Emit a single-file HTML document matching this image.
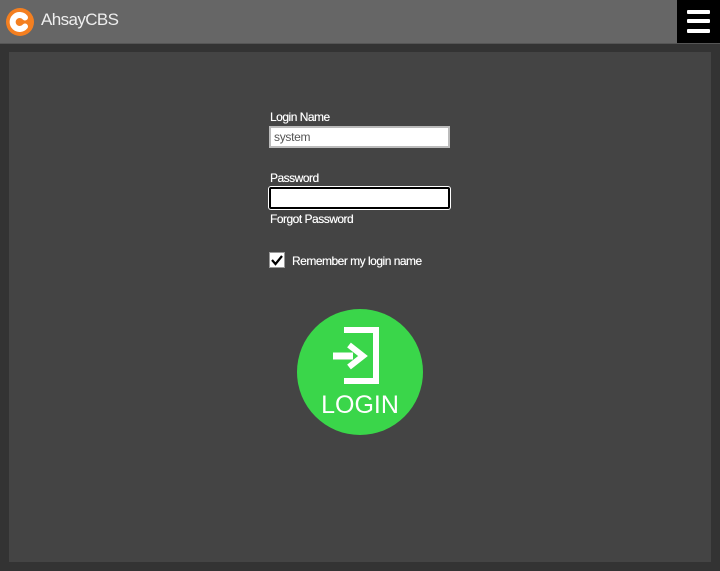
<!DOCTYPE html>
<html><head><style>
body{margin:0;width:720px;height:571px;background:#333;font-family:"Liberation Sans",Arial,sans-serif;position:relative;overflow:hidden}
.hdr{position:absolute;left:0;top:0;width:720px;height:43px;background:#666;border-bottom:1px solid #555}
.logo{position:absolute;left:6px;top:8px;width:28px;height:28px;border-radius:50%;background:#f47f20}
.brand{position:absolute;left:41px;top:10px;color:#eee;font-size:17px;font-family:"Liberation Sans",sans-serif;letter-spacing:-0.6px}
.menu{position:absolute;left:677px;top:0;width:43px;height:43px;background:#000}
.menu i{position:absolute;left:10px;width:23px;height:4px;background:#fff;border-radius:1px}
.panel{position:absolute;left:9px;top:52px;width:702px;height:510px;background:#444}
.lbl{position:absolute;color:#fff;font-size:12px;letter-spacing:-0.5px;text-shadow:0 0 0.4px #fff}
.inp{position:absolute;left:269px;width:177px;height:18px;background:#fff;border:2px solid #bbb}
.cb{position:absolute;left:269px;top:252px;width:14px;height:14px;background:#fff;border:1px solid #999}
.btn{position:absolute;left:297px;top:309px;width:126px;height:126px;border-radius:50%;background:#3ad64a}
</style></head><body>
<div class="hdr">
<div class="logo"><svg width="28" height="28" viewBox="0 0 28 28"><path d="M19 9.5 A7 7 0 1 0 19 18.5" fill="none" stroke="#fff" stroke-width="6" stroke-linecap="round"/></svg></div>
<div class="brand">AhsayCBS</div>
</div>
<div class="menu"><i style="top:10px"></i><i style="top:19px"></i><i style="top:29px"></i></div>
<div class="panel"></div>
<div class="lbl" style="left:270px;top:110px">Login Name</div>
<div class="inp" style="top:126px"><span style="position:absolute;left:3px;top:2px;font-size:12px;color:#555;letter-spacing:-0.3px">system</span></div>
<div class="lbl" style="left:270px;top:171px">Password</div>
<div class="inp" style="top:187px;border-color:#000;box-shadow:0 0 0 1px #fff;border-radius:2px"></div>
<div class="lbl" style="left:270px;top:212px">Forgot Password</div>
<div class="cb"><svg width="14" height="14" viewBox="0 0 14 14"><path d="M2 7 L5.5 11 L12 3" fill="none" stroke="#000" stroke-width="2.2"/></svg></div>
<div class="lbl" style="left:292px;top:254px">Remember my login name</div>
<div class="btn">
<svg width="126" height="126" viewBox="0 0 126 126" style="position:absolute;left:0;top:0">
<path d="M47 21 H79 V72 H47" fill="none" stroke="#fff" stroke-width="6"/>
<rect x="44" y="34" width="6" height="26" fill="#3ad64a"/>
<path d="M36 47 H56" stroke="#fff" stroke-width="7"/>
<path d="M52 36 L66 47 L52 58" fill="none" stroke="#fff" stroke-width="6"/>
<text x="63" y="104" text-anchor="middle" fill="#fff" font-size="25" font-family="Liberation Sans,Arial,sans-serif">LOGIN</text>
</svg>
</div>
</body></html>
